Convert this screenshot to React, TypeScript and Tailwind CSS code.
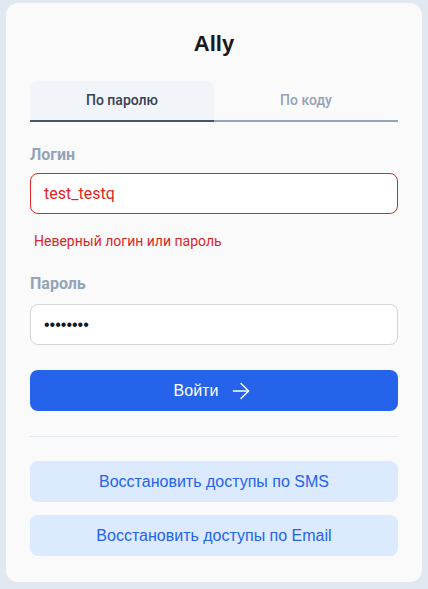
import { ArrowRight } from 'lucide-react'

export default function App() {
  return (
    <div className="min-h-[589px] bg-[#e2e8f0] px-[6px] pt-[3px] pb-2 font-['Liberation_Sans',Arial,sans-serif]">
      <div className="rounded-[12px] bg-[#fafafa] px-6 pt-[28px] pb-[26px]">
        <h1 className="text-center text-[22px] font-bold leading-[26px] text-[#18181b]">Ally</h1>

        <div className="mt-[24px] flex font-['Roboto',sans-serif] text-[14px] font-medium">
          <div className="flex h-[41px] flex-1 items-center justify-center rounded-t-[8px] border-b-2 border-[#475569] bg-[#f1f5f9] text-[#374151]">
            По паролю
          </div>
          <div className="flex h-[41px] flex-1 items-center justify-center border-b-2 border-[#94a3b8] text-[#94a3b8]">
            По коду
          </div>
        </div>

        <label className="mt-[23px] block font-['Roboto',sans-serif] text-[16px] font-bold leading-[20px] text-[#94a3b8]">
          Логин
        </label>
        <div className="mt-[8px] flex h-[41px] items-center rounded-[8px] border border-[#dc2626] bg-white px-[13px] font-['Roboto',sans-serif] text-[16px] text-[#dc2626]">
          test_testq
        </div>
        <p className="mt-[18px] px-1 font-['Roboto',sans-serif] text-[14px] leading-[18px] text-[#dc2626]">
          Неверный логин или пароль
        </p>

        <label className="mt-[24px] block font-['Roboto',sans-serif] text-[16px] font-bold leading-[20px] text-[#94a3b8]">
          Пароль
        </label>
        <div className="mt-[10px] flex h-[41px] items-center rounded-[8px] border border-[#d4d4d8] bg-white px-[13px] text-[16px] text-[#111827]">
          ••••••••
        </div>

        <button
          type="button"
          className="mt-[25px] flex h-[41px] w-full items-center justify-center gap-[10px] rounded-[8px] bg-[#2563eb] text-[16px] text-white"
        >
          <span>Войти</span>
          <ArrowRight className="h-[26px] w-[26px]" strokeWidth={1.3} />
        </button>

        <div className="mt-[25px] h-px bg-[#e2e8f0]" />

        <div className="mt-[24px] flex flex-col gap-[13px]">
          <button
            type="button"
            className="h-[41px] w-full rounded-[8px] bg-[#dbeafe] text-[16px] text-[#2563eb]"
          >
            Восстановить доступы по SMS
          </button>
          <button
            type="button"
            className="h-[41px] w-full rounded-[8px] bg-[#dbeafe] text-[16px] text-[#2563eb]"
          >
            Восстановить доступы по Email
          </button>
        </div>
      </div>
    </div>
  )
}
